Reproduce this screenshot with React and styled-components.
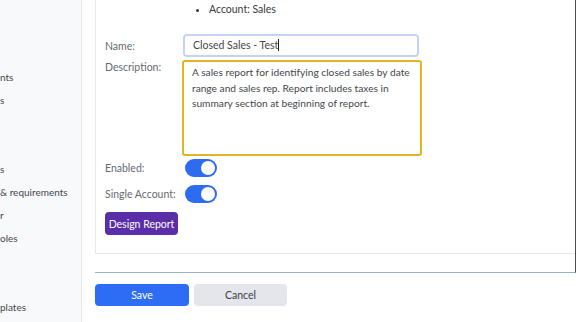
import styled, { createGlobalStyle } from 'styled-components'

const GlobalStyle = createGlobalStyle`
  html, body {
    margin: 0;
    background: #ffffff;
    overflow: hidden;
  }

  body {
    font-family: "Segoe UI", "Lato", "Noto Sans", sans-serif;
  }
`

const StyledPage = styled.div`
  display: flex;
  height: 322px;
  width: 576px;
`

const StyledSidebar = styled.nav`
  background: #f8f9fa;
  border-right: 1px solid #e4e7eb;
  box-sizing: border-box;
  flex: 0 0 82px;
  overflow: hidden;
  padding-top: 66px;
`

const SideItem = styled.div`
  color: #44484e;
  font-size: 10px;
  height: 23px;
  line-height: 23px;
  white-space: nowrap;
`

const StyledMain = styled.main`
  flex: 1;
  padding-left: 13px;
`

const StyledFrame = styled.div`
  border-bottom: 1px solid #9bb4c2;
  border-right: 1px solid #4a4d52;
  height: 273px;
  box-sizing: border-box;
`

const StyledCard = styled.section`
  border-bottom: 1px solid #e6e8eb;
  border-left: 1px solid #e6e8eb;
  height: 254px;
  box-sizing: border-box;
  padding-left: 9px;
`

const StyledBullets = styled.ul`
  color: #383b40;
  font-size: 10.5px;
  height: 18px;
  line-height: 18px;
  margin: 0 0 16px;
  padding-left: 104px;
`

const FormRow = styled.div`
  align-items: ${props => props.top ? 'flex-start' : 'center'};
  display: flex;
  margin-top: ${props => props.gap || 0}px;
`

const Label = styled.label`
  color: #666a70;
  flex: 0 0 ${props => props.width || 78}px;
  font-size: 10.5px;
  padding-top: ${props => props.top ? 1 : 0}px;
`

const TextInput = styled.div`
  border: 2px solid #c3d3f3;
  border-radius: 4px;
  box-sizing: border-box;
  color: #44474c;
  font-size: 10.5px;
  height: 23px;
  line-height: 19px;
  padding-left: 8px;
  width: 236px;
`

const Caret = styled.span`
  border-left: 1px solid #222;
  display: inline-block;
  height: 12px;
  vertical-align: -2px;
`

const TextArea = styled.div`
  border: 2px solid #e2b324;
  border-radius: 3px;
  box-sizing: border-box;
  color: #44474c;
  font-size: 10.2px;
  height: 96px;
  line-height: 15.5px;
  margin-left: -1px;
  padding: 3px 8px;
  width: 240px;
`

const Toggle = styled.span`
  background: #2d6cf0;
  border-radius: 9px;
  display: flex;
  height: 18px;
  justify-content: ${props => props.on ? 'flex-end' : 'flex-start'};
  margin-left: 2px;
  padding: 2px;
  box-sizing: border-box;
  width: 32px;

  &::after {
    background: #ffffff;
    border-radius: 50%;
    content: '';
    height: 14px;
    width: 14px;
  }
`

const Button = styled.button`
  background: ${props => props.bg};
  border: none;
  border-radius: 4px;
  color: ${props => props.fg};
  font-family: inherit;
  font-size: 10.5px;
  height: ${props => props.h || 22}px;
  padding: 0;
  width: ${props => props.w}px;
`

const StyledActions = styled.div`
  display: flex;
  gap: 5px;
  margin-top: 11px;
`

const sideItems = ['nts', 's', '', '', 's', '& requirements', 'r', 'oles', '', '', 'plates']

const App = () => (
  <StyledPage>
    <GlobalStyle />
    <StyledSidebar>
      {sideItems.map((item, i) => <SideItem key={i}>{item}</SideItem>)}
    </StyledSidebar>
    <StyledMain>
      <StyledFrame>
        <StyledCard>
          <StyledBullets>
            <li>Account: Sales</li>
          </StyledBullets>
          <FormRow>
            <Label>Name:</Label>
            <TextInput>Closed Sales - Test<Caret /></TextInput>
          </FormRow>
          <FormRow top gap={3}>
            <Label top>Description:</Label>
            <TextArea>
              A sales report for identifying closed sales by date range and sales rep. Report includes taxes in summary section at beginning of report.
            </TextArea>
          </FormRow>
          <FormRow gap={3}>
            <Label>Enabled:</Label>
            <Toggle on />
          </FormRow>
          <FormRow gap={8}>
            <Label>Single Account:</Label>
            <Toggle on />
          </FormRow>
          <FormRow gap={9}>
            <Button bg='#5a2ea6' fg='#ffffff' w={73} h={23}>Design Report</Button>
          </FormRow>
        </StyledCard>
      </StyledFrame>
      <StyledActions>
        <Button bg='#2d6cf5' fg='#ffffff' w={94}>Save</Button>
        <Button bg='#e4e6eb' fg='#3a3d42' w={93}>Cancel</Button>
      </StyledActions>
    </StyledMain>
  </StyledPage>
)

export default App
